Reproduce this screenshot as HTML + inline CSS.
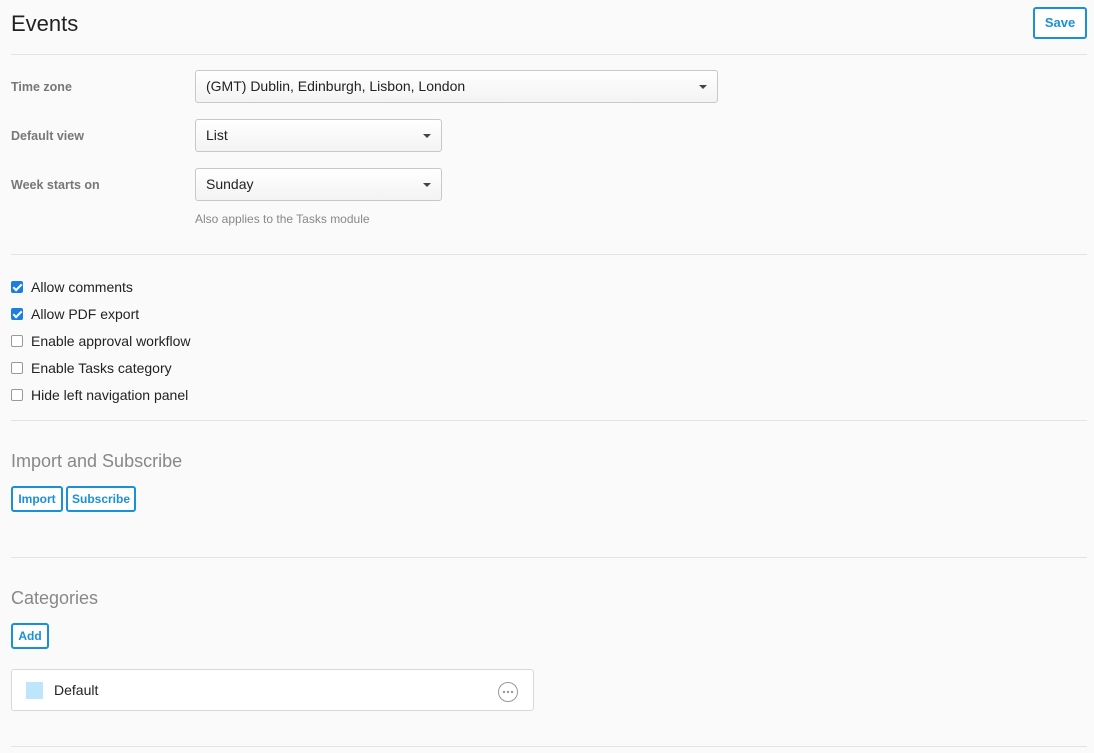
<!DOCTYPE html>
<html><head><style>
*{box-sizing:border-box;margin:0;padding:0}
body{width:1094px;height:753px;background:#fafafa;font-family:"Liberation Sans",sans-serif;position:relative;overflow:hidden;color:#222}
.abs{position:absolute}
.hr{position:absolute;left:11px;width:1076px;height:1px;background:#e3e3e3}
.lbl{position:absolute;left:11px;font-size:12.5px;font-weight:bold;color:#777}
.sel{position:absolute;left:195px;height:33px;border:1px solid #c8c8c8;border-radius:3px;background:linear-gradient(#fff,#f3f3f3);font-size:14px;padding:7px 0 0 10px;color:#222}
.sel:after{content:"";position:absolute;right:10px;top:14px;border:4px solid transparent;border-top:4px solid #444}
.btn{position:absolute;border:2px solid #1a90d6;border-radius:3px;color:#1a90d6;font-size:12px;font-weight:600;background:#fff;text-align:center}
.cb{position:absolute;left:11px;width:12px;height:12px;border:1px solid #999;border-radius:2px;background:#fff}
.cb.on{background:#1a7fe0;border-color:#1a7fe0}
.cb.on:after{content:"";position:absolute;left:3px;top:0px;width:3px;height:7px;border:solid #fff;border-width:0 2px 2px 0;transform:rotate(45deg)}
.ct{position:absolute;left:31px;font-size:14px;color:#222}
.h2{position:absolute;left:11px;font-size:18px;color:#888}
</style></head><body>
<div class="abs" style="left:11px;top:11px;font-size:22px;color:#222">Events</div>
<div class="btn" style="left:1033px;top:7px;width:54px;height:32px;line-height:28px;font-size:13px">Save</div>
<div class="hr" style="top:54px"></div>
<div class="lbl" style="top:80px">Time zone</div>
<div class="sel" style="top:70px;width:523px">(GMT) Dublin, Edinburgh, Lisbon, London</div>
<div class="lbl" style="top:129px">Default view</div>
<div class="sel" style="top:119px;width:247px">List</div>
<div class="lbl" style="top:178px">Week starts on</div>
<div class="sel" style="top:168px;width:247px">Sunday</div>
<div class="abs" style="left:195px;top:212px;font-size:12px;color:#888">Also applies to the Tasks module</div>
<div class="hr" style="top:254px"></div>
<div class="cb on" style="top:281px"></div><div class="ct" style="top:279px">Allow comments</div>
<div class="cb on" style="top:308px"></div><div class="ct" style="top:306px">Allow PDF export</div>
<div class="cb" style="top:335px"></div><div class="ct" style="top:333px">Enable approval workflow</div>
<div class="cb" style="top:362px"></div><div class="ct" style="top:360px">Enable Tasks category</div>
<div class="cb" style="top:389px"></div><div class="ct" style="top:387px">Hide left navigation panel</div>
<div class="hr" style="top:420px"></div>
<div class="h2" style="top:451px">Import and Subscribe</div>
<div class="btn" style="left:11px;top:486px;width:52px;height:26px;line-height:22px">Import</div>
<div class="btn" style="left:66px;top:486px;width:70px;height:26px;line-height:22px">Subscribe</div>
<div class="hr" style="top:557px"></div>
<div class="h2" style="top:588px">Categories</div>
<div class="btn" style="left:11px;top:623px;width:38px;height:26px;line-height:22px">Add</div>
<div class="abs" style="left:11px;top:669px;width:523px;height:42px;border:1px solid #d8d8d8;border-radius:3px;background:#fff"></div>
<div class="abs" style="left:26px;top:682px;width:17px;height:17px;background:#bde6fb"></div>
<div class="abs" style="left:54px;top:682px;font-size:14px">Default</div>
<svg class="abs" style="left:497px;top:681px" width="22" height="22"><circle cx="11" cy="11" r="9.5" fill="none" stroke="#999" stroke-width="1"/><circle cx="7" cy="11" r="1.2" fill="#999"/><circle cx="11" cy="11" r="1.2" fill="#999"/><circle cx="15" cy="11" r="1.2" fill="#999"/></svg>
<div class="hr" style="top:746px"></div>
</body></html>
